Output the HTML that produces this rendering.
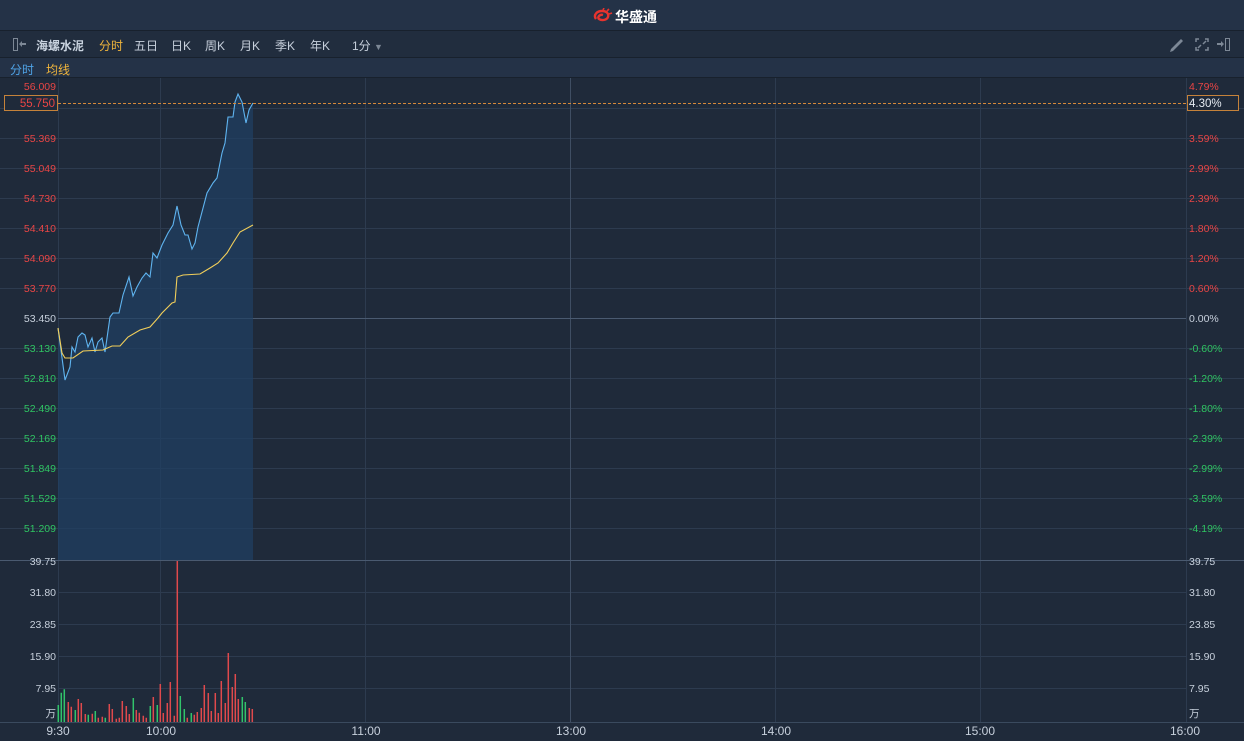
<!DOCTYPE html>
<html><head><meta charset="utf-8"><style>
*{margin:0;padding:0;box-sizing:border-box}
body{width:1244px;height:741px;background:#1f2a3a;font-family:"Liberation Sans","Noto Sans CJK SC",sans-serif;position:relative;overflow:hidden}
.top{position:absolute;left:0;top:0;width:1244px;height:31px;background:#243247;border-bottom:1px solid #18212d}
.tb{position:absolute;left:0;top:31px;width:1244px;height:27px;background:#212d3e;border-bottom:1px solid #18212d}
.sb{position:absolute;left:0;top:58px;width:1244px;height:20px;background:#243247;border-bottom:1px solid #18212d}
.t{position:absolute;font-size:12px;color:#c7d0dc;white-space:nowrap}
svg{position:absolute;left:0;top:0}
</style></head><body>
<div class="top"></div>
<div style="position:absolute;left:593px;top:8px;width:20px;height:14px">
<svg width="20" height="14" viewBox="0 0 20 14"><path d="M3 11 C0 7 4 3 9 3 C14 3 16 6 15 9 C14 12 9 13 6 11 C4 9 7 6 10 7" fill="none" stroke="#e8332e" stroke-width="2.4"/><path d="M10 2 L11 0 M14 3 L16 1 M16 6 L19 5" stroke="#e8332e" stroke-width="1.6"/></svg></div>
<div class="t" style="left:615px;top:7px;font-size:14px;font-weight:bold;color:#fff">华盛通</div>
<div class="tb"></div>
<div class="t" style="left:36px;top:37px;font-weight:bold;color:#c9d3df">海螺水泥</div>
<div class="t" style="left:99px;top:37px;color:#f0b53c">分时</div>
<div class="t" style="left:134px;top:37px">五日</div>
<div class="t" style="left:171px;top:37px">日K</div>
<div class="t" style="left:205px;top:37px">周K</div>
<div class="t" style="left:240px;top:37px">月K</div>
<div class="t" style="left:275px;top:37px">季K</div>
<div class="t" style="left:310px;top:37px">年K</div>
<div class="t" style="left:352px;top:37px">1分 <span style="color:#7d8896;font-size:9px">▼</span></div>
<svg width="1244" height="60" style="top:31px">
<rect x="13.5" y="7.5" width="4" height="12" fill="none" stroke="#7d8896"/>
<path d="M26 12h-4v-2l-3 3 3 3v-2h4z" fill="#7d8896"/>
<path d="M1171 18 L1181 8 L1183 10 L1173 20 L1170 21Z" fill="#7d8896"/>
<g stroke="#7d8896" stroke-width="1.5" fill="none"><path d="M1196 11V8h3M1205 8h3v3M1208 16v3h-3M1199 19h-3v-3M1198 17l3-3M1206 10l-3 3"/></g>
<path d="M1217 12h4v-2l3 3-3 3v-2h-4z" fill="#7d8896"/><rect x="1225.5" y="7.5" width="4" height="12" fill="none" stroke="#7d8896"/>
</svg>
<div class="sb"></div>
<div class="t" style="left:10px;top:61px;color:#4fa3e6">分时</div>
<div class="t" style="left:46px;top:61px;color:#f0b53c">均线</div>
<svg width="1244" height="741">
<g stroke="#2d3b4f" stroke-width="1">
<line x1="58.5" y1="78" x2="58.5" y2="722"/>
<line x1="1186.5" y1="78" x2="1186.5" y2="722"/>
<line x1="160.5" y1="78" x2="160.5" y2="722"/><line x1="365.5" y1="78" x2="365.5" y2="722"/>
<line x1="775.5" y1="78" x2="775.5" y2="722"/><line x1="980.5" y1="78" x2="980.5" y2="722"/>
<line x1="0" y1="108.5" x2="1244" y2="108.5"/><line x1="0" y1="138.5" x2="1244" y2="138.5"/>
<line x1="0" y1="168.5" x2="1244" y2="168.5"/><line x1="0" y1="198.5" x2="1244" y2="198.5"/>
<line x1="0" y1="228.5" x2="1244" y2="228.5"/><line x1="0" y1="258.5" x2="1244" y2="258.5"/>
<line x1="0" y1="288.5" x2="1244" y2="288.5"/><line x1="0" y1="348.5" x2="1244" y2="348.5"/>
<line x1="0" y1="378.5" x2="1244" y2="378.5"/><line x1="0" y1="408.5" x2="1244" y2="408.5"/>
<line x1="0" y1="438.5" x2="1244" y2="438.5"/><line x1="0" y1="468.5" x2="1244" y2="468.5"/>
<line x1="0" y1="498.5" x2="1244" y2="498.5"/><line x1="0" y1="528.5" x2="1244" y2="528.5"/>
<line x1="58" y1="592.5" x2="1186" y2="592.5"/><line x1="58" y1="624.5" x2="1186" y2="624.5"/>
<line x1="58" y1="656.5" x2="1186" y2="656.5"/><line x1="58" y1="688.5" x2="1186" y2="688.5"/>
</g>
<line x1="570.5" y1="78" x2="570.5" y2="722" stroke="#3f4e63"/>
<line x1="58" y1="318.5" x2="1186" y2="318.5" stroke="#4a5a70"/>
<line x1="0" y1="560.5" x2="1244" y2="560.5" stroke="#4a5a70"/>
<line x1="0" y1="722.5" x2="1244" y2="722.5" stroke="#3a4a5e"/>
<path d="M58 328L65 380L70 367L72 347L75 352L78 337L82 333L85 335L88 347L92 338L95 352L98 342L102 338L105 352L110 317L113 313L119 313L123 295L129 277L133 296L137 287L142 278L146 273L150 277L153 253L157 258L162 245L168 233L173 225L177 206L181 225L185 235L188 235L192 249L195 243L198 227L207 193L213 183L217 178L222 153L225 143L228 117L233 117L235 102L238 94L242 102L246 123L249 110L253 103L253 560L58 560Z" fill="#1f4064" fill-opacity="0.7"/>
<path d="M58 328L65 380L70 367L72 347L75 352L78 337L82 333L85 335L88 347L92 338L95 352L98 342L102 338L105 352L110 317L113 313L119 313L123 295L129 277L133 296L137 287L142 278L146 273L150 277L153 253L157 258L162 245L168 233L173 225L177 206L181 225L185 235L188 235L192 249L195 243L198 227L207 193L213 183L217 178L222 153L225 143L228 117L233 117L235 102L238 94L242 102L246 123L249 110L253 103" fill="none" stroke="#5fb4f0" stroke-width="1.1"/>
<path d="M58 328L62 353L65 358L73 358L83 351L103 350L112 346L120 346L128 337L140 330L150 327L158 318L162 313L172 303L175 302L177 277L183 275L200 274L210 268L218 263L227 253L233 243L240 232L253 225" fill="none" stroke="#f2cf5a" stroke-width="1.1"/>
<line x1="58" y1="103.5" x2="1186" y2="103.5" stroke="#d6893a" stroke-dasharray="3,2"/>
<rect x="4.5" y="95.5" width="53" height="15" fill="#1f2a3a" stroke="#c5823a"/>
<rect x="1187.5" y="95.5" width="51" height="15" fill="#1f2a3a" stroke="#c5823a"/>
<g stroke-width="1.5">
<g stroke="#31c46b"><path d="M58.3 722V705M61.3 722V692.7M64.3 722V689.3M75.3 722V710M88.3 722V714.7M95.3 722V711M105.3 722V717.7M133.3 722V698M150.3 722V706M157.3 722V705M180.3 722V696M184.3 722V709M191.3 722V713M242.3 722V697M245.3 722V702"/></g>
<g stroke="#e0494c"><path d="M68.3 722V702M71.3 722V706.7M78.3 722V699M81.3 722V703M85.3 722V714M92.3 722V713.7M98.3 722V717.7M102.3 722V716.7M109.3 722V704M112.3 722V709M116.3 722V718.7M119.3 722V717.7M122.3 722V701M126.3 722V706M129.3 722V714M136.3 722V710M139.3 722V712.7M143.3 722V715.7M146.3 722V717.7M153.3 722V697M160.3 722V684M163.3 722V713M167.3 722V703M170.3 722V682M174.3 722V715.7M177.3 722V561M187.3 722V717.7M194.3 722V714.7M197.3 722V712M201.3 722V708M204.3 722V685M208.3 722V693M211.3 722V711M215.3 722V693M218.3 722V713M221.3 722V681M225.3 722V703M228.3 722V653M232.3 722V687M235.3 722V674M238.3 722V699M249.3 722V708M252.3 722V709"/></g>
</g>
<g font-family="Liberation Sans,sans-serif" font-size="10.5" text-anchor="end">
<text x="56" y="90" fill="#e84545">56.009</text>
<text x="55" y="107" fill="#e84545" font-size="11.5">55.750</text>
<text x="56" y="142" fill="#e84545">55.369</text>
<text x="56" y="172" fill="#e84545">55.049</text>
<text x="56" y="202" fill="#e84545">54.730</text>
<text x="56" y="232" fill="#e84545">54.410</text>
<text x="56" y="262" fill="#e84545">54.090</text>
<text x="56" y="292" fill="#e84545">53.770</text>
<text x="56" y="322" fill="#c7d0dc">53.450</text>
<text x="56" y="352" fill="#2fc462">53.130</text>
<text x="56" y="382" fill="#2fc462">52.810</text>
<text x="56" y="412" fill="#2fc462">52.490</text>
<text x="56" y="442" fill="#2fc462">52.169</text>
<text x="56" y="472" fill="#2fc462">51.849</text>
<text x="56" y="502" fill="#2fc462">51.529</text>
<text x="56" y="532" fill="#2fc462">51.209</text>
<g fill="#c7d0dc"><text x="56" y="565">39.75</text><text x="56" y="596">31.80</text><text x="56" y="628">23.85</text><text x="56" y="660">15.90</text><text x="56" y="692">7.95</text><text x="56" y="717">万</text></g>
</g>
<g font-family="Liberation Sans,sans-serif" font-size="10.5">
<text x="1189" y="90" fill="#e84545">4.79%</text>
<text x="1189" y="107" fill="#e6ecf2" font-size="11.5">4.30%</text>
<text x="1189" y="142" fill="#e84545">3.59%</text>
<text x="1189" y="172" fill="#e84545">2.99%</text>
<text x="1189" y="202" fill="#e84545">2.39%</text>
<text x="1189" y="232" fill="#e84545">1.80%</text>
<text x="1189" y="262" fill="#e84545">1.20%</text>
<text x="1189" y="292" fill="#e84545">0.60%</text>
<text x="1189" y="322" fill="#c7d0dc">0.00%</text>
<text x="1189" y="352" fill="#2fc462">-0.60%</text>
<text x="1189" y="382" fill="#2fc462">-1.20%</text>
<text x="1189" y="412" fill="#2fc462">-1.80%</text>
<text x="1189" y="442" fill="#2fc462">-2.39%</text>
<text x="1189" y="472" fill="#2fc462">-2.99%</text>
<text x="1189" y="502" fill="#2fc462">-3.59%</text>
<text x="1189" y="532" fill="#2fc462">-4.19%</text>
<g fill="#c7d0dc"><text x="1189" y="565">39.75</text><text x="1189" y="596">31.80</text><text x="1189" y="628">23.85</text><text x="1189" y="660">15.90</text><text x="1189" y="692">7.95</text><text x="1189" y="717">万</text></g>
</g>
<g font-family="Liberation Sans,sans-serif" font-size="12" fill="#c7d0dc" text-anchor="middle">
<text x="58" y="735">9:30</text><text x="161" y="735">10:00</text><text x="366" y="735">11:00</text><text x="571" y="735">13:00</text><text x="776" y="735">14:00</text><text x="980" y="735">15:00</text><text x="1185" y="735">16:00</text>
</g>
</svg>
</body></html>
